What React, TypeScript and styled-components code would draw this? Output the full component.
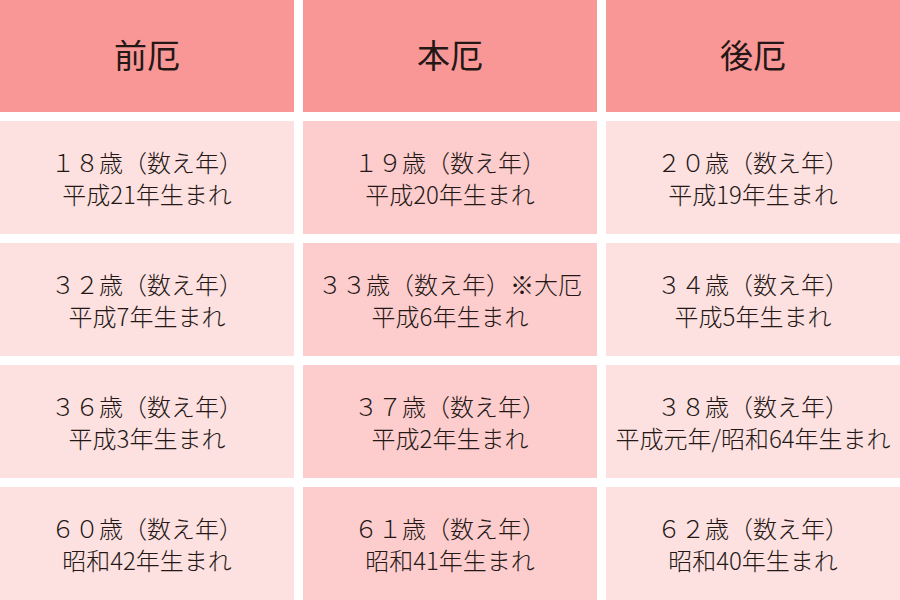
import React, { FC } from 'react';
import styled, { createGlobalStyle } from 'styled-components';

const GlobalStyle = createGlobalStyle`
  html, body {
    margin: 0;
    padding: 0;
    background: #ffffff;
  }
  body {
    font-family: 'Noto Sans CJK JP', 'Noto Sans', sans-serif;
    color: #231815;
  }
`;

const Table = styled.div`
  display: grid;
  grid-template-columns: repeat(3, 1fr);
  grid-template-rows: 112px repeat(4, 1fr);
  gap: 9px;
  width: 900px;
  height: 600px;
  background: #ffffff;
`;

const HeadCell = styled.div`
  display: flex;
  align-items: center;
  justify-content: center;
  background: #f99797;
  font-size: 33px;
  font-weight: 400;
  padding-bottom: 4px;
`;

const Cell = styled.div<{ $main?: boolean }>`
  display: flex;
  flex-direction: column;
  align-items: center;
  justify-content: center;
  background: ${(p) => (p.$main ? '#fdcccd' : '#fde0e0')};
  font-size: 24px;
  font-weight: 300;
  line-height: 32px;
  padding-top: 0;
  white-space: nowrap;
`;

type Entry = { age: string; born: string };

const heads = ['前厄', '本厄', '後厄'];

const rows: Entry[][] = [
  [
    { age: '１８歳（数え年）', born: '平成21年生まれ' },
    { age: '１９歳（数え年）', born: '平成20年生まれ' },
    { age: '２０歳（数え年）', born: '平成19年生まれ' },
  ],
  [
    { age: '３２歳（数え年）', born: '平成7年生まれ' },
    { age: '３３歳（数え年）※大厄', born: '平成6年生まれ' },
    { age: '３４歳（数え年）', born: '平成5年生まれ' },
  ],
  [
    { age: '３６歳（数え年）', born: '平成3年生まれ' },
    { age: '３７歳（数え年）', born: '平成2年生まれ' },
    { age: '３８歳（数え年）', born: '平成元年/昭和64年生まれ' },
  ],
  [
    { age: '６０歳（数え年）', born: '昭和42年生まれ' },
    { age: '６１歳（数え年）', born: '昭和41年生まれ' },
    { age: '６２歳（数え年）', born: '昭和40年生まれ' },
  ],
];

const App: FC = () => {
  return (
    <>
      <GlobalStyle />
      <Table>
        {heads.map((h) => (
          <HeadCell key={h}>{h}</HeadCell>
        ))}
        {rows.map((row, i) =>
          row.map((e, j) => (
            <Cell key={`${i}-${j}`} $main={j === 1}>
              <span>{e.age}</span>
              <span>{e.born}</span>
            </Cell>
          ))
        )}
      </Table>
    </>
  );
};

export default App;
